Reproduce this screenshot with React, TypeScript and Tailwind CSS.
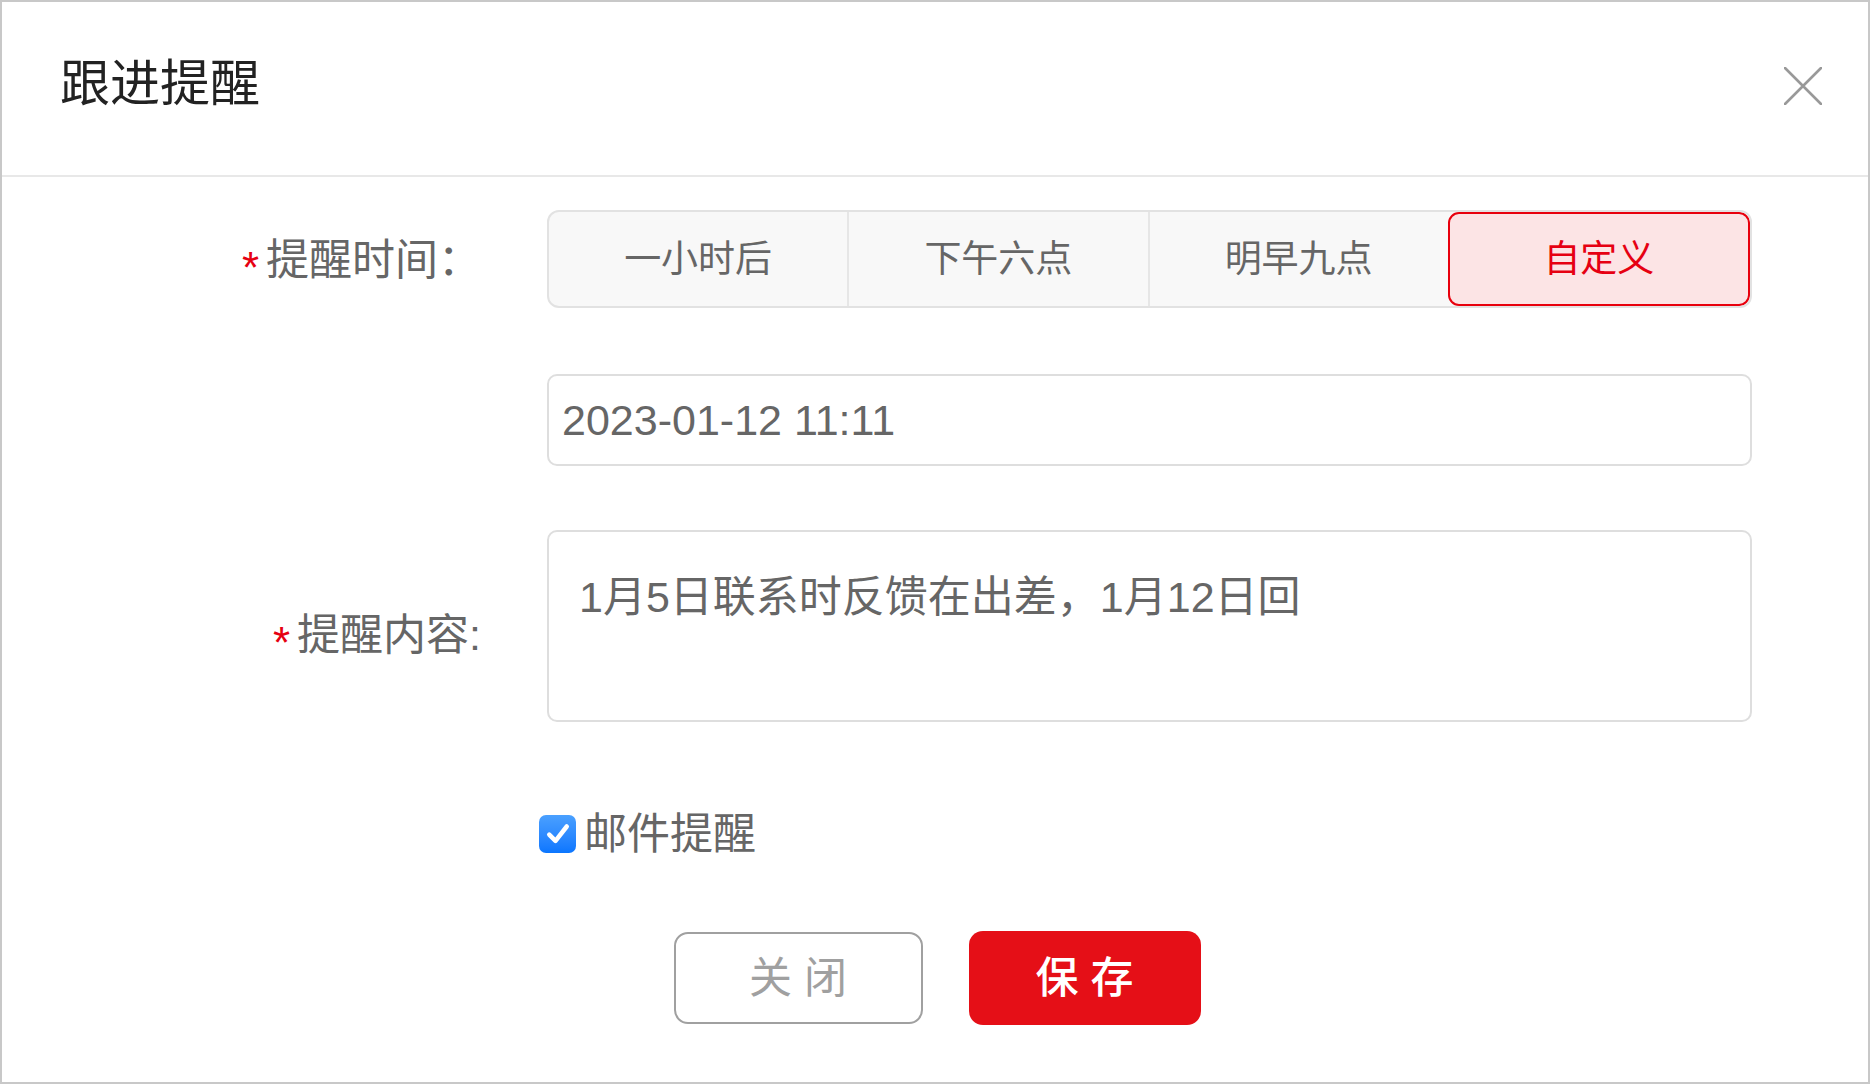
import { useState } from 'react';

const OPTIONS = ['一小时后', '下午六点', '明早九点', '自定义'];

function Label({ text, className }: { text: string; className: string }) {
  return (
    <div className={'w-[479px] shrink-0 text-right text-[43px] leading-none text-[#666] whitespace-nowrap ' + className}>
      <span className="inline-block text-[44px] text-[#e60012] align-[-8px] mr-[7px]">*</span>
      {text}
    </div>
  );
}

export default function App() {
  const [active, setActive] = useState(3);
  const [mail, setMail] = useState(true);

  return (
    <div className="w-[1872px] h-[1084px] bg-white font-['Liberation_Sans','Noto_Sans_CJK_SC',sans-serif]">
      <div className="w-[1870px] h-[1084px] border-2 border-[#c8c8c8] flex flex-col">
        {/* header */}
        <div className="h-[175px] shrink-0 border-b-2 border-[#e8e8e8] flex items-center justify-between pl-[58px] pr-[46px] pb-[10px]">
          <h1 className="text-[50px] leading-none text-[#222] font-normal">跟进提醒</h1>
          <button className="w-[38px] h-[38px] mt-[4px]">
            <svg viewBox="0 0 38 38" className="w-[38px] h-[38px]">
              <path d="M1 1 L37 37 M37 1 L1 37" stroke="#999" strokeWidth="2.6" strokeLinecap="round" fill="none" />
            </svg>
          </button>
        </div>

        {/* body */}
        <div className="flex flex-col pt-[33px]">
          <div className="flex items-center">
            <Label text="提醒时间：" className="mt-[10px]" />
            <div className="ml-[66px] w-[1205px] h-[98px] flex border-2 border-[#e2e2e2] rounded-[12px] bg-[#f8f8f8] overflow-hidden">
              {OPTIONS.map((o, i) => (
                <button
                  key={o}
                  onClick={() => setActive(i)}
                  className={
                    i === active
                      ? 'flex-1 flex items-center justify-center text-[37px] leading-none text-[#e60012] bg-[#fce4e5] border-2 border-[#e8000d] rounded-[11px]'
                      : i === 0
                        ? 'flex-1 flex items-center justify-center text-[37px] leading-none text-[#666]'
                        : 'flex-1 flex items-center justify-center text-[37px] leading-none text-[#666] border-l-2 border-[#e6e6e6]'
                  }
                >
                  {o}
                </button>
              ))}
            </div>
          </div>

          <div className="flex items-center mt-[66px]">
            <div className="w-[479px] shrink-0" />
            <div className="ml-[66px] w-[1205px] h-[92px] flex items-center border-2 border-[#dedede] rounded-[10px] pl-[13px] text-[43px] leading-none text-[#666]">
              2023-01-12 11:11
            </div>
          </div>

          <div className="flex items-center mt-[64px]">
            <Label text="提醒内容:" className="mt-[26px]" />
            <div className="ml-[66px] w-[1205px] h-[192px] border-2 border-[#dedede] rounded-[10px] pl-[30px] pt-[44px] text-[43px] leading-none text-[#666]">
              1月5日联系时反馈在出差，1月12日回
            </div>
          </div>

          <div className="flex items-center mt-[90px] h-[44px] pl-[537px]">
            <button
              onClick={() => setMail(!mail)}
              className="w-[37px] h-[38px] rounded-[7px] bg-gradient-to-b from-[#4aa0ff] to-[#0a76ff] flex items-center justify-center"
            >
              {mail && (
                <svg viewBox="0 0 24 24" className="w-[30px] h-[30px]">
                  <path d="M5 12.5 L10 17.5 L19 6" stroke="#fff" strokeWidth="3.6" strokeLinecap="round" strokeLinejoin="round" fill="none" />
                </svg>
              )}
            </button>
            <span className="ml-[8px] text-[43px] leading-none text-[#666]">邮件提醒</span>
          </div>

          <div className="flex items-center justify-center gap-[46px] mt-[75px] pl-[4px]">
            <button className="w-[249px] h-[92px] border-2 border-[#a0a0a0] rounded-[14px] text-[43px] leading-none text-[#a0a0a0] bg-white">
              关 闭
            </button>
            <button className="w-[232px] h-[94px] rounded-[14px] bg-[#e50f17] text-[43px] leading-none text-white font-medium">
              保 存
            </button>
          </div>
        </div>
      </div>
    </div>
  );
}
